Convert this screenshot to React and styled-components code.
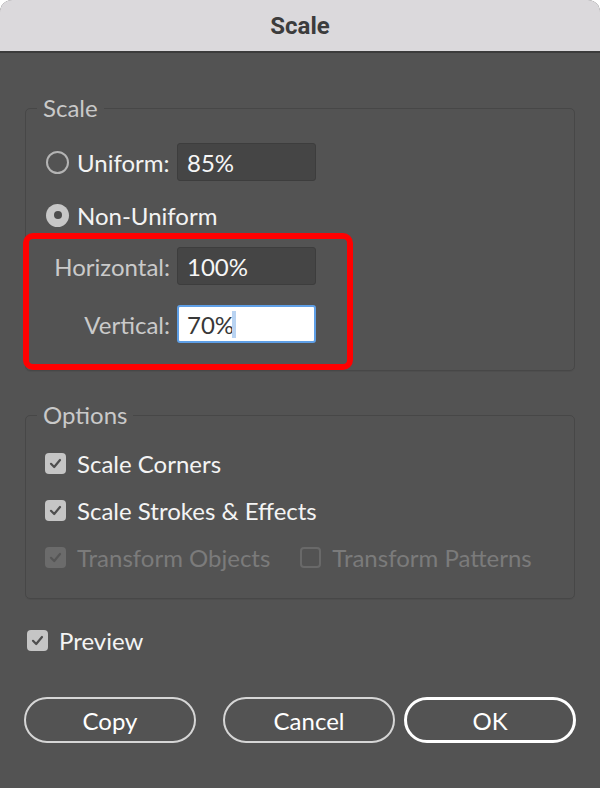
import React from 'react';
import styled, { createGlobalStyle } from 'styled-components';

const Global = createGlobalStyle`
  html, body { margin: 0; padding: 0; background: #ffffff; }
  body { font-family: Lato, "Open Sans", sans-serif; }
  #root { width: 600px; height: 788px; }
`;

const Window = styled.div`
  width: 600px;
  height: 788px;
  background: #535353;
  border-radius: 12px 12px 0 0;
  overflow: hidden;
  display: flex;
  flex-direction: column;
`;

const TitleBar = styled.header`
  flex: none;
  height: 51px;
  background: #dbd9dc;
  border-bottom: 2px solid #3b3b3b;
  display: flex;
  align-items: center;
  justify-content: center;
  font-family: Roboto, Inter, sans-serif;
  font-weight: 700;
  font-size: 24px;
  color: #3c3c3c;
`;

const Body = styled.main`
  flex: 1;
  display: flex;
  flex-direction: column;
  padding: 43px 25px 0 25px;
`;

const Group = styled.fieldset`
  margin: ${p => p.$top || 0}px 0 0 0;
  padding: 0;
  min-width: 0;
  border: 1px solid #474747;
  border-radius: 5px;
  box-shadow: 0 1px 0 rgba(0, 0, 0, 0.05);
`;

const Legend = styled.legend`
  margin-left: 11px;
  padding: 0 6px;
  font-size: 24px;
  line-height: 24px;
  color: #c9c9c9;
`;

const GroupContent = styled.div`
  display: flex;
  flex-direction: column;
  padding: ${p => p.$pad};
`;

const FieldRow = styled.div`
  display: grid;
  grid-template-columns: 124px 139px;
  column-gap: 7px;
  align-items: center;
  height: 38px;
  margin-top: ${p => p.$top || 0}px;
`;

const Label = styled.div`
  display: flex;
  align-items: center;
  justify-content: ${p => (p.$right ? 'flex-end' : 'flex-start')};
  gap: 8px;
  font-size: 24px;
  color: ${p => (p.$dim ? '#cacaca' : '#f3f3f3')};
  white-space: nowrap;
`;

const Radio = styled.span`
  box-sizing: border-box;
  flex: none;
  width: 23px;
  height: 23px;
  border-radius: 50%;
  border: ${p => (p.$checked ? 'none' : '2px solid #b4b4b4')};
  background: ${p => (p.$checked ? '#c7c7c7' : 'transparent')};
  display: flex;
  align-items: center;
  justify-content: center;
  &::after {
    content: '';
    display: ${p => (p.$checked ? 'block' : 'none')};
    width: 8px;
    height: 8px;
    border-radius: 50%;
    background: #4c4c4c;
  }
`;

const Field = styled.div`
  box-sizing: border-box;
  height: 38px;
  width: 139px;
  display: flex;
  align-items: center;
  padding-left: ${p => (p.$focused ? 8 : 9)}px;
  border-radius: 3px;
  font-size: 24px;
  background: ${p => (p.$focused ? '#ffffff' : '#454545')};
  border: ${p => (p.$focused ? '2px solid #5f9fe6' : '1px solid #3d3d3d')};
  color: ${p => (p.$focused ? '#383838' : '#f6f6f6')};
`;

const Caret = styled.span`
  display: inline-block;
  width: 4px;
  height: 27px;
  margin-left: -2px;
  background: #b8d3f2;
`;

const Highlight = styled.div`
  position: relative;
  align-self: flex-start;
  margin-top: 13px;
  display: flex;
  flex-direction: column;
  gap: 20px;
  &::before {
    content: '';
    position: absolute;
    top: -14px;
    bottom: -27px;
    left: -23px;
    right: -37px;
    border: 6px solid #ff0000;
    border-radius: 10px;
    pointer-events: none;
  }
`;

const CheckRow = styled.div`
  display: flex;
  align-items: center;
  height: 32px;
  gap: ${p => p.$gap || 0}px;
`;

const CheckItem = styled.label`
  display: flex;
  align-items: center;
  gap: 11px;
  font-size: 24px;
  white-space: nowrap;
  color: ${p => (p.$disabled ? '#7b7b7b' : '#f4f4f4')};
`;

const Box = styled.span`
  box-sizing: border-box;
  flex: none;
  width: 21px;
  height: 21px;
  border-radius: 4px;
  display: flex;
  align-items: center;
  justify-content: center;
  background: ${p => (p.$checked ? (p.$disabled ? '#6b6b6b' : '#c5c5c5') : 'transparent')};
  border: ${p => (p.$checked ? 'none' : '2px solid #696969')};
`;

const Check = ({ checked, disabled }) => (
  <Box $checked={checked} $disabled={disabled}>
    {checked && (
      <svg width="15" height="15" viewBox="0 0 15 15">
        <path
          d="M3 7.8 L6.2 11 L12 4"
          fill="none"
          stroke={disabled ? '#555555' : '#4e4e4e'}
          strokeWidth="2.2"
          strokeLinecap="round"
          strokeLinejoin="round"
        />
      </svg>
    )}
  </Box>
);

const OptionList = styled.div`
  display: flex;
  flex-direction: column;
  gap: 15px;
`;

const PreviewRow = styled(CheckRow)`
  margin: 25px 0 0 2px;
`;

const ButtonRow = styled.div`
  display: flex;
  margin: 41px -1px 0 -1px;
`;

const Button = styled.button`
  box-sizing: border-box;
  width: 172px;
  height: 46px;
  margin-left: ${p => p.$gap || 0}px;
  border-radius: 23px;
  background: transparent;
  border: ${p => (p.$primary ? '3px solid #ffffff' : '2px solid #d6d6d6')};
  color: #ffffff;
  font-family: Lato, "Open Sans", sans-serif;
  font-size: 24px;
  padding: 0;
`;

export default function App() {
  return (
    <>
      <Global />
      <Window>
        <TitleBar>Scale</TitleBar>
        <Body>
          <Group>
            <Legend>Scale</Legend>
            <GroupContent $pad="23px 20px 27px 20px">
              <FieldRow>
                <Label>
                  <Radio />
                  Uniform:
                </Label>
                <Field>85%</Field>
              </FieldRow>
              <FieldRow $top={15}>
                <Label>
                  <Radio $checked />
                  Non-Uniform
                </Label>
              </FieldRow>
              <Highlight>
                <FieldRow>
                  <Label $right $dim>Horizontal:</Label>
                  <Field>100%</Field>
                </FieldRow>
                <FieldRow>
                  <Label $right $dim>Vertical:</Label>
                  <Field $focused>
                    70%
                    <Caret />
                  </Field>
                </FieldRow>
              </Highlight>
            </GroupContent>
          </Group>

          <Group $top={32}>
            <Legend>Options</Legend>
            <GroupContent $pad="20px 19px 25px 19px">
              <OptionList>
                <CheckRow>
                  <CheckItem>
                    <Check checked />
                    Scale Corners
                  </CheckItem>
                </CheckRow>
                <CheckRow>
                  <CheckItem>
                    <Check checked />
                    Scale Strokes &amp; Effects
                  </CheckItem>
                </CheckRow>
                <CheckRow $gap={30}>
                  <CheckItem $disabled>
                    <Check checked disabled />
                    Transform Objects
                  </CheckItem>
                  <CheckItem $disabled>
                    <Check disabled />
                    Transform Patterns
                  </CheckItem>
                </CheckRow>
              </OptionList>
            </GroupContent>
          </Group>

          <PreviewRow>
            <CheckItem>
              <Check checked />
              Preview
            </CheckItem>
          </PreviewRow>

          <ButtonRow>
            <Button>Copy</Button>
            <Button $gap={27}>Cancel</Button>
            <Button $gap={9} $primary>OK</Button>
          </ButtonRow>
        </Body>
      </Window>
    </>
  );
}
